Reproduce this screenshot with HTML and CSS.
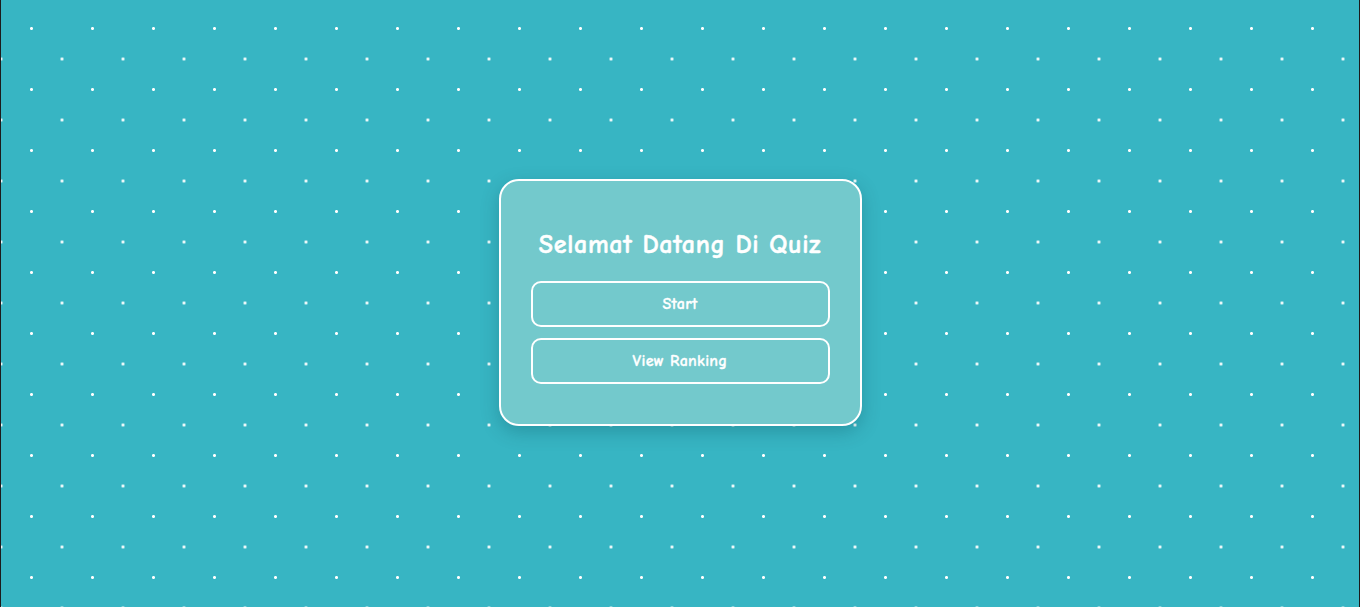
FILE: index.html
```html
<!DOCTYPE html>
<html lang="id">
<head>
<meta charset="utf-8">
<title>Quiz</title>
<link rel="stylesheet" href="styles.css">
</head>
<body>
<main class="page">
  <section class="card">
    <h1 class="title">Selamat Datang Di Quiz</h1>
    <div class="actions">
      <button class="btn" type="button">Start</button>
      <button class="btn" type="button">View Ranking</button>
    </div>
  </section>
</main>
</body>
</html>
```
FILE: styles.css
```css
html, body {
  margin: 0;
  padding: 0;
  height: 100%;
}
body {
  background-color: #37b5c3;
  background-image:
    radial-gradient(circle at center, #ffffff 1.1px, rgba(255,255,255,0) 1.9px),
    radial-gradient(circle at center, #ffffff 1.1px, rgba(255,255,255,0) 1.9px);
  background-size: 61px 61px;
  background-position: 1px -2px, -29.5px 28.5px;
  border-left: 1px solid #1c1c1c;
  border-right: 1px solid #1c1c1c;
  box-sizing: border-box;
  font-family: "Comic Sans MS", "Comic Neue", "DejaVu Sans", sans-serif;
  color: #ffffff;
}
.page {
  height: 100%;
  box-sizing: border-box;
  padding-bottom: 2px;
  display: flex;
  align-items: center;
  justify-content: center;
}
.card {
  width: 363px;
  box-sizing: border-box;
  padding: 40px 30px 40px;
  background: #73c9cc;
  border: 2px solid #ffffff;
  border-radius: 20px;
  box-shadow: 0 6px 18px rgba(0, 60, 70, 0.25);
  display: flex;
  flex-direction: column;
  align-items: stretch;
}
.title {
  margin: 8px 0 20px;
  font-size: 26px;
  line-height: 32px;
  letter-spacing: 0.7px;
  font-weight: 800;
  text-align: center;
  color: #ffffff;
  -webkit-text-stroke: 0.5px #ffffff;
}
.actions {
  display: flex;
  flex-direction: column;
  gap: 11px;
}
.btn {
  height: 46px;
  background: transparent;
  border: 2px solid #ffffff;
  border-radius: 10px;
  color: #ffffff;
  font-family: inherit;
  font-size: 16px;
  letter-spacing: 0.3px;
  font-weight: 800;
  -webkit-text-stroke: 0.3px #ffffff;
  cursor: pointer;
}
```
